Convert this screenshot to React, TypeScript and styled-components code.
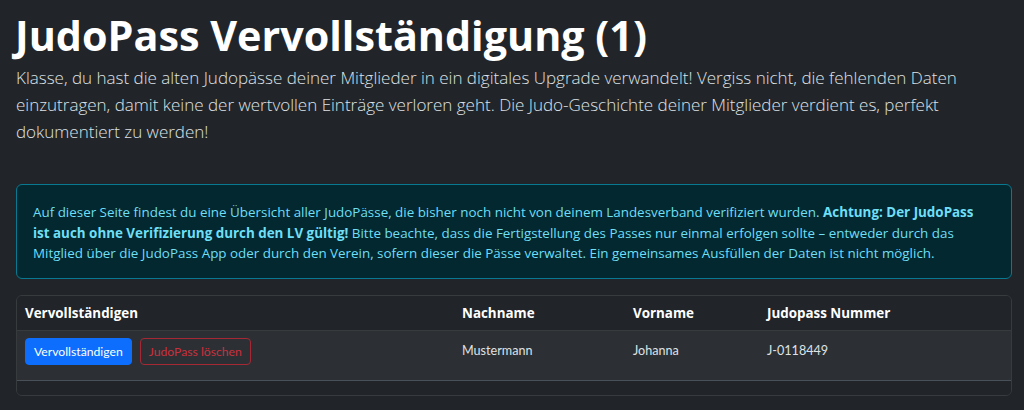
import React from "react";
import styled, { createGlobalStyle } from "styled-components";

const GlobalStyle = createGlobalStyle`
  html, body {
    margin: 0;
    padding: 0;
    background: #212529;
    color: #dee2e6;
    font-family: "Open Sans", "Noto Sans", "Liberation Sans", sans-serif;
  }
  * { box-sizing: border-box; }
`;

interface Member {
  nachname: string;
  vorname: string;
  nummer: string;
}

const members: Member[] = [{ nachname: "Mustermann", vorname: "Johanna", nummer: "J-0118449" }];

function App() {
  return (
    <>
      <GlobalStyle />
      <Page>
        <Title>JudoPass Vervollständigung (1)</Title>
        <Lead>
          Klasse, du hast die alten Judopässe deiner Mitglieder in ein digitales Upgrade verwandelt! Vergiss nicht, die
          fehlenden Daten einzutragen, damit keine der wertvollen Einträge verloren geht. Die Judo-Geschichte deiner
          Mitglieder verdient es, perfekt dokumentiert zu werden!
        </Lead>
        <InfoAlert>
          Auf dieser Seite findest du eine Übersicht aller JudoPässe, die bisher noch nicht von deinem Landesverband
          verifiziert wurden. <strong>Achtung: Der JudoPass ist auch ohne Verifizierung durch den LV gültig!</strong>{" "}
          Bitte beachte, dass die Fertigstellung des Passes nur einmal erfolgen sollte – entweder durch das Mitglied
          über die JudoPass App oder durch den Verein, sofern dieser die Pässe verwaltet. Ein gemeinsames Ausfüllen der
          Daten ist nicht möglich.
        </InfoAlert>
        <TableWrap>
          <Table>
            <colgroup>
              <col style={{ width: 437 }} />
              <col style={{ width: 171 }} />
              <col style={{ width: 134 }} />
              <col />
            </colgroup>
            <thead>
              <tr>
                <Th>Vervollständigen</Th>
                <Th>Nachname</Th>
                <Th>Vorname</Th>
                <Th>Judopass Nummer</Th>
              </tr>
            </thead>
            <tbody>
              {members.map((m) => (
                <Row key={m.nummer}>
                  <Td>
                    <Actions>
                      <Button variant="primary">Vervollständigen</Button>
                      <Button variant="danger">JudoPass löschen</Button>
                    </Actions>
                  </Td>
                  <Td>{m.nachname}</Td>
                  <Td>{m.vorname}</Td>
                  <Td>{m.nummer}</Td>
                </Row>
              ))}
            </tbody>
          </Table>
          <TableFoot />
        </TableWrap>
      </Page>
    </>
  );
}

export default App;

const Page = styled.div`
  padding: 8px 12px 16px 16px;
`;

const Title = styled.h1`
  margin: 0 0 0 -1px;
  font-size: 41.3px;
  line-height: 54px;
  font-weight: 700;
  color: #fff;
`;

const Lead = styled.p`
  margin: 2px 0 39px;
  font-size: 17px;
  font-weight: 300;
  line-height: 27px;
  color: #dee2e6;
  max-width: 990px;
`;

const InfoAlert = styled.div`
  padding: 17px 22px 14px 16px;
  margin-bottom: 16px;
  font-size: 13.4px;
  line-height: 20.5px;
  color: #6edff6;
  background: #032830;
  border: 1px solid #087990;
  border-radius: 6px;

  strong {
    font-weight: 700;
  }
`;

const TableWrap = styled.div`
  border: 1px solid #373b3e;
  border-radius: 6px;
  overflow: hidden;
`;

const Table = styled.table`
  width: 100%;
  border-collapse: collapse;
  table-layout: fixed;
  font-size: 13.4px;
`;

const Th = styled.th`
  text-align: left;
  padding: 8px 8px;
  height: 35px;
  font-weight: 700;
  color: #fff;
  background: #212529;
  border-bottom: 1px solid #373b3e;
`;

const Row = styled.tr`
  background: #2c3034;
  border-bottom: 1px solid #495057;
`;

const Td = styled.td`
  padding: 7px 8px;
  height: 50px;
  vertical-align: top;
  color: #dee2e6;
  font-family: Lato, "Open Sans", sans-serif;
  font-size: 12.6px;
  line-height: 24px;

  &:not(:first-child) {
    padding-top: 8px;
  }
`;

const Actions = styled.div`
  display: flex;
  gap: 8px;
`;

const Button = styled.button<{ variant: "primary" | "danger" }>`
  font-family: Lato, "Open Sans", sans-serif;
  font-size: 12.2px;
  line-height: 19px;
  padding: 3px 8px;
  border-radius: 4px;
  cursor: pointer;
  border: 1px solid ${(p) => (p.variant === "primary" ? "#0d6efd" : "#a52834")};
  background: ${(p) => (p.variant === "primary" ? "#0d6efd" : "transparent")};
  color: ${(p) => (p.variant === "primary" ? "#fff" : "#c9303e")};
`;

const TableFoot = styled.div`
  height: 14px;
  background: #212529;
`;
